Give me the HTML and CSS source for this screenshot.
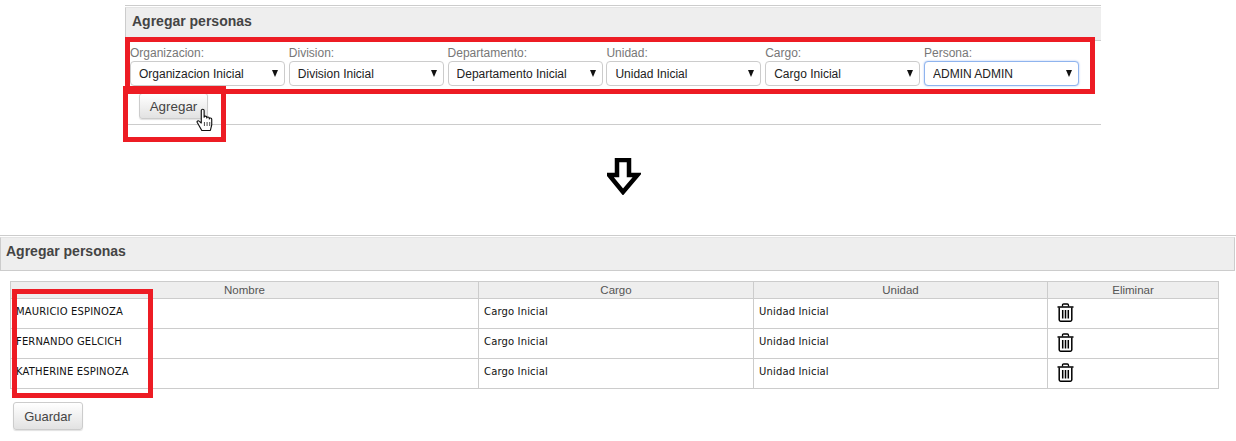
FILE: index.html
```html
<!DOCTYPE html>
<html lang="es">
<head>
<meta charset="utf-8">
<title>Agregar personas</title>
<link rel="stylesheet" href="styles.css">
</head>
<body>
<section class="panel-top">
  <h2 class="panel-title">Agregar personas</h2>
  <form class="filters">
    <label class="field"><span class="field-label">Organizacion:</span><span class="select-wrap"><select class="select"><option>Organizacion Inicial</option></select><i class="caret"></i></span></label>
    <label class="field"><span class="field-label">Division:</span><span class="select-wrap"><select class="select"><option>Division Inicial</option></select><i class="caret"></i></span></label>
    <label class="field"><span class="field-label">Departamento:</span><span class="select-wrap"><select class="select"><option>Departamento Inicial</option></select><i class="caret"></i></span></label>
    <label class="field"><span class="field-label">Unidad:</span><span class="select-wrap"><select class="select"><option>Unidad Inicial</option></select><i class="caret"></i></span></label>
    <label class="field"><span class="field-label">Cargo:</span><span class="select-wrap"><select class="select"><option>Cargo Inicial</option></select><i class="caret"></i></span></label>
    <label class="field"><span class="field-label">Persona:</span><span class="select-wrap"><select class="select select-focus"><option>ADMIN ADMIN</option></select><i class="caret"></i></span></label>
  </form>
  <div class="add-row">
    <button type="button" class="btn btn-add">Agregar</button>
    <svg class="hand" width="19" height="24" viewBox="0 0 18 24" preserveAspectRatio="none"><path d="M5.500 22.500 1.200 14.600c-.7-1.400 1-2.400 2-1.300L5 15V2.600c0-1.900 2.700-1.900 2.700 0V9.200c0-1.500 2.500-1.500 2.500 0v.8c0-1.400 2.400-1.400 2.400.1v.8c0-1.300 2.300-1.200 2.300.3v5.600l-1.300 5.700z" fill="#fff" stroke="#111" stroke-width="1.100" stroke-linejoin="round"/><path d="M8 14v4M10.500 14v4M13 14v4" stroke="#555" fill="none"/></svg>
  </div>
</section>

<div class="arrow-row">
  <svg width="34" height="37" viewBox="0 0 34 37"><path d="M10 2h12v15h8.500L16 34 2 17h8z" fill="#fff" stroke="#000" stroke-width="4.500"/></svg>
</div>

<section class="panel-bottom">
  <h2 class="panel-title">Agregar personas</h2>
  <table class="people">
    <colgroup><col class="col-name"><col class="col-cargo"><col class="col-unidad"><col class="col-del"></colgroup>
    <thead><tr><th>Nombre</th><th>Cargo</th><th>Unidad</th><th>Eliminar</th></tr></thead>
    <tbody>
      <tr><td>MAURICIO ESPINOZA</td><td>Cargo Inicial</td><td>Unidad Inicial</td><td><svg class="trash" width="17" height="19" viewBox="0 0 17 19"><use href="#trash-icon"/></svg></td></tr>
      <tr><td>FERNANDO GELCICH</td><td>Cargo Inicial</td><td>Unidad Inicial</td><td><svg class="trash" width="17" height="19" viewBox="0 0 17 19"><use href="#trash-icon"/></svg></td></tr>
      <tr><td>KATHERINE ESPINOZA</td><td>Cargo Inicial</td><td>Unidad Inicial</td><td><svg class="trash" width="17" height="19" viewBox="0 0 17 19"><use href="#trash-icon"/></svg></td></tr>
    </tbody>
  </table>
  <button type="button" class="btn btn-save">Guardar</button>
</section>

<svg class="defs" width="0" height="0"><defs><g id="trash-icon" fill="none" stroke="#000"><path d="M.5 4h16" stroke-width="1.500"/><path d="M5.500 3.500V2.200Q5.500 1 6.700 1h3.600q1.200 0 1.200 1.200v1.300" stroke-width="1.300"/><path d="M2.200 4.500v12.300q0 1.400 1.400 1.400h9.800q1.400 0 1.400-1.400V4.500" stroke-width="1.500"/><path d="M5.700 7v8.500M8.500 7v8.500M11.300 7v8.500" stroke-width="1.500"/></g></defs></svg>

<div class="mark mark-filters"></div>
<div class="mark mark-add"></div>
<div class="mark mark-names"></div>
</body>
</html>
```
FILE: styles.css
```css
* { box-sizing: border-box; }
html, body { margin: 0; padding: 0; }
body {
  position: relative;
  width: 1236px;
  height: 441px;
  overflow: hidden;
  background: #fff;
  font-family: "Liberation Sans", Arial, sans-serif;
  color: #555;
}
.panel-top {
  margin: 5px 135px 0 125px;
  border-top: 1px solid #ccc;
  border-bottom: 1px solid #ccc;
  height: 120px;
  padding-top: 1px;
}
.panel-bottom {
  margin-top: 40px;
  border-top: 1px solid #ccc;
  padding-top: 1px;
}
.panel-title {
  margin: 0;
  height: 34px;
  padding: 0 6px;
  background: #eee;
  border: 1px solid #ccc;
  border-top-color: #e4e4e4;
  font-size: 14px;
  font-weight: bold;
  line-height: 27px;
  color: #444;
}
.panel-top .panel-title { border-right: 0; }
.panel-bottom .panel-title {
  padding: 0 5px;
  margin-right: 1px;
}
.filters {
  display: grid;
  grid-template-columns: repeat(6, 155px);
  column-gap: 3.8px;
  padding: 3px 0 0 5px;
}
.field { display: block; }
.field-label {
  display: block;
  height: 17px;
  padding-top: 1px;
  font-size: 12px;
  line-height: 17px;
  color: #777;
}
.select-wrap { display: block; position: relative; }
.select {
  display: block;
  width: 100%;
  height: 25px;
  padding: 0 8px;
  appearance: none;
  -webkit-appearance: none;
  background: #fff;
  border: 1px solid #ccc;
  border-radius: 4px;
  font-family: inherit;
  font-size: 12px;
  color: #222;
  outline: 0;
}
.select-focus {
  border-color: #8fb4ee;
  box-shadow: 0 0 2px rgba(102, 150, 233, .6);
}
.caret {
  position: absolute;
  right: 7px;
  top: 9px;
  border-left: 3.5px solid transparent;
  border-right: 3.5px solid transparent;
  border-top: 7px solid #111;
}
.add-row {
  position: relative;
  padding: 7px 0 0 14px;
}
.btn {
  display: block;
  padding: 0;
  background: linear-gradient(#fff, #e2e2e2);
  border: 1px solid #ccc;
  border-radius: 3px;
  box-shadow: 0 1px 1px rgba(0, 0, 0, .12);
  font-family: inherit;
  font-size: 13px;
  color: #444;
}
.btn-add { width: 69px; height: 26px; font-size: 13.400px; }
.btn-save { width: 70px; height: 28px; margin: 13px 0 0 13px; }
.hand { position: absolute; left: 71px; top: 22px; }
.arrow-row {
  height: 37px;
  margin-top: 33px;
  padding-left: 607px;
}
.arrow-row svg { display: block; }
.people {
  width: 1208px;
  margin: 10px 0 0 10px;
  table-layout: fixed;
  border-collapse: collapse;
}
.col-name { width: 468px; }
.col-cargo { width: 275px; }
.col-unidad { width: 294px; }
.col-del { width: 171px; }
.people th {
  height: 17px;
  padding: 0;
  background: #eee;
  border: 1px solid #ccc;
  font-size: 11.500px;
  font-weight: normal;
  line-height: 16px;
  color: #555;
}
.people td {
  height: 30px;
  padding: 5px 5px 0;
  border: 1px solid #ccc;
  vertical-align: top;
  font-family: "DejaVu Sans", Verdana, sans-serif;
  font-size: 10px;
  letter-spacing: .15px;
  line-height: 16px;
  color: #111;
}
.trash { display: block; margin: -1px 0 0 4px; }
.defs { position: absolute; }
.mark {
  position: absolute;
  border: 5px solid #ed1c24;
  pointer-events: none;
}
.mark-filters { left: 125px; top: 37px; width: 970px; height: 57px; }
.mark-add { left: 123px; top: 86px; width: 103px; height: 56px; }
.mark-names { left: 12px; top: 289px; width: 141px; height: 109px; }
```
